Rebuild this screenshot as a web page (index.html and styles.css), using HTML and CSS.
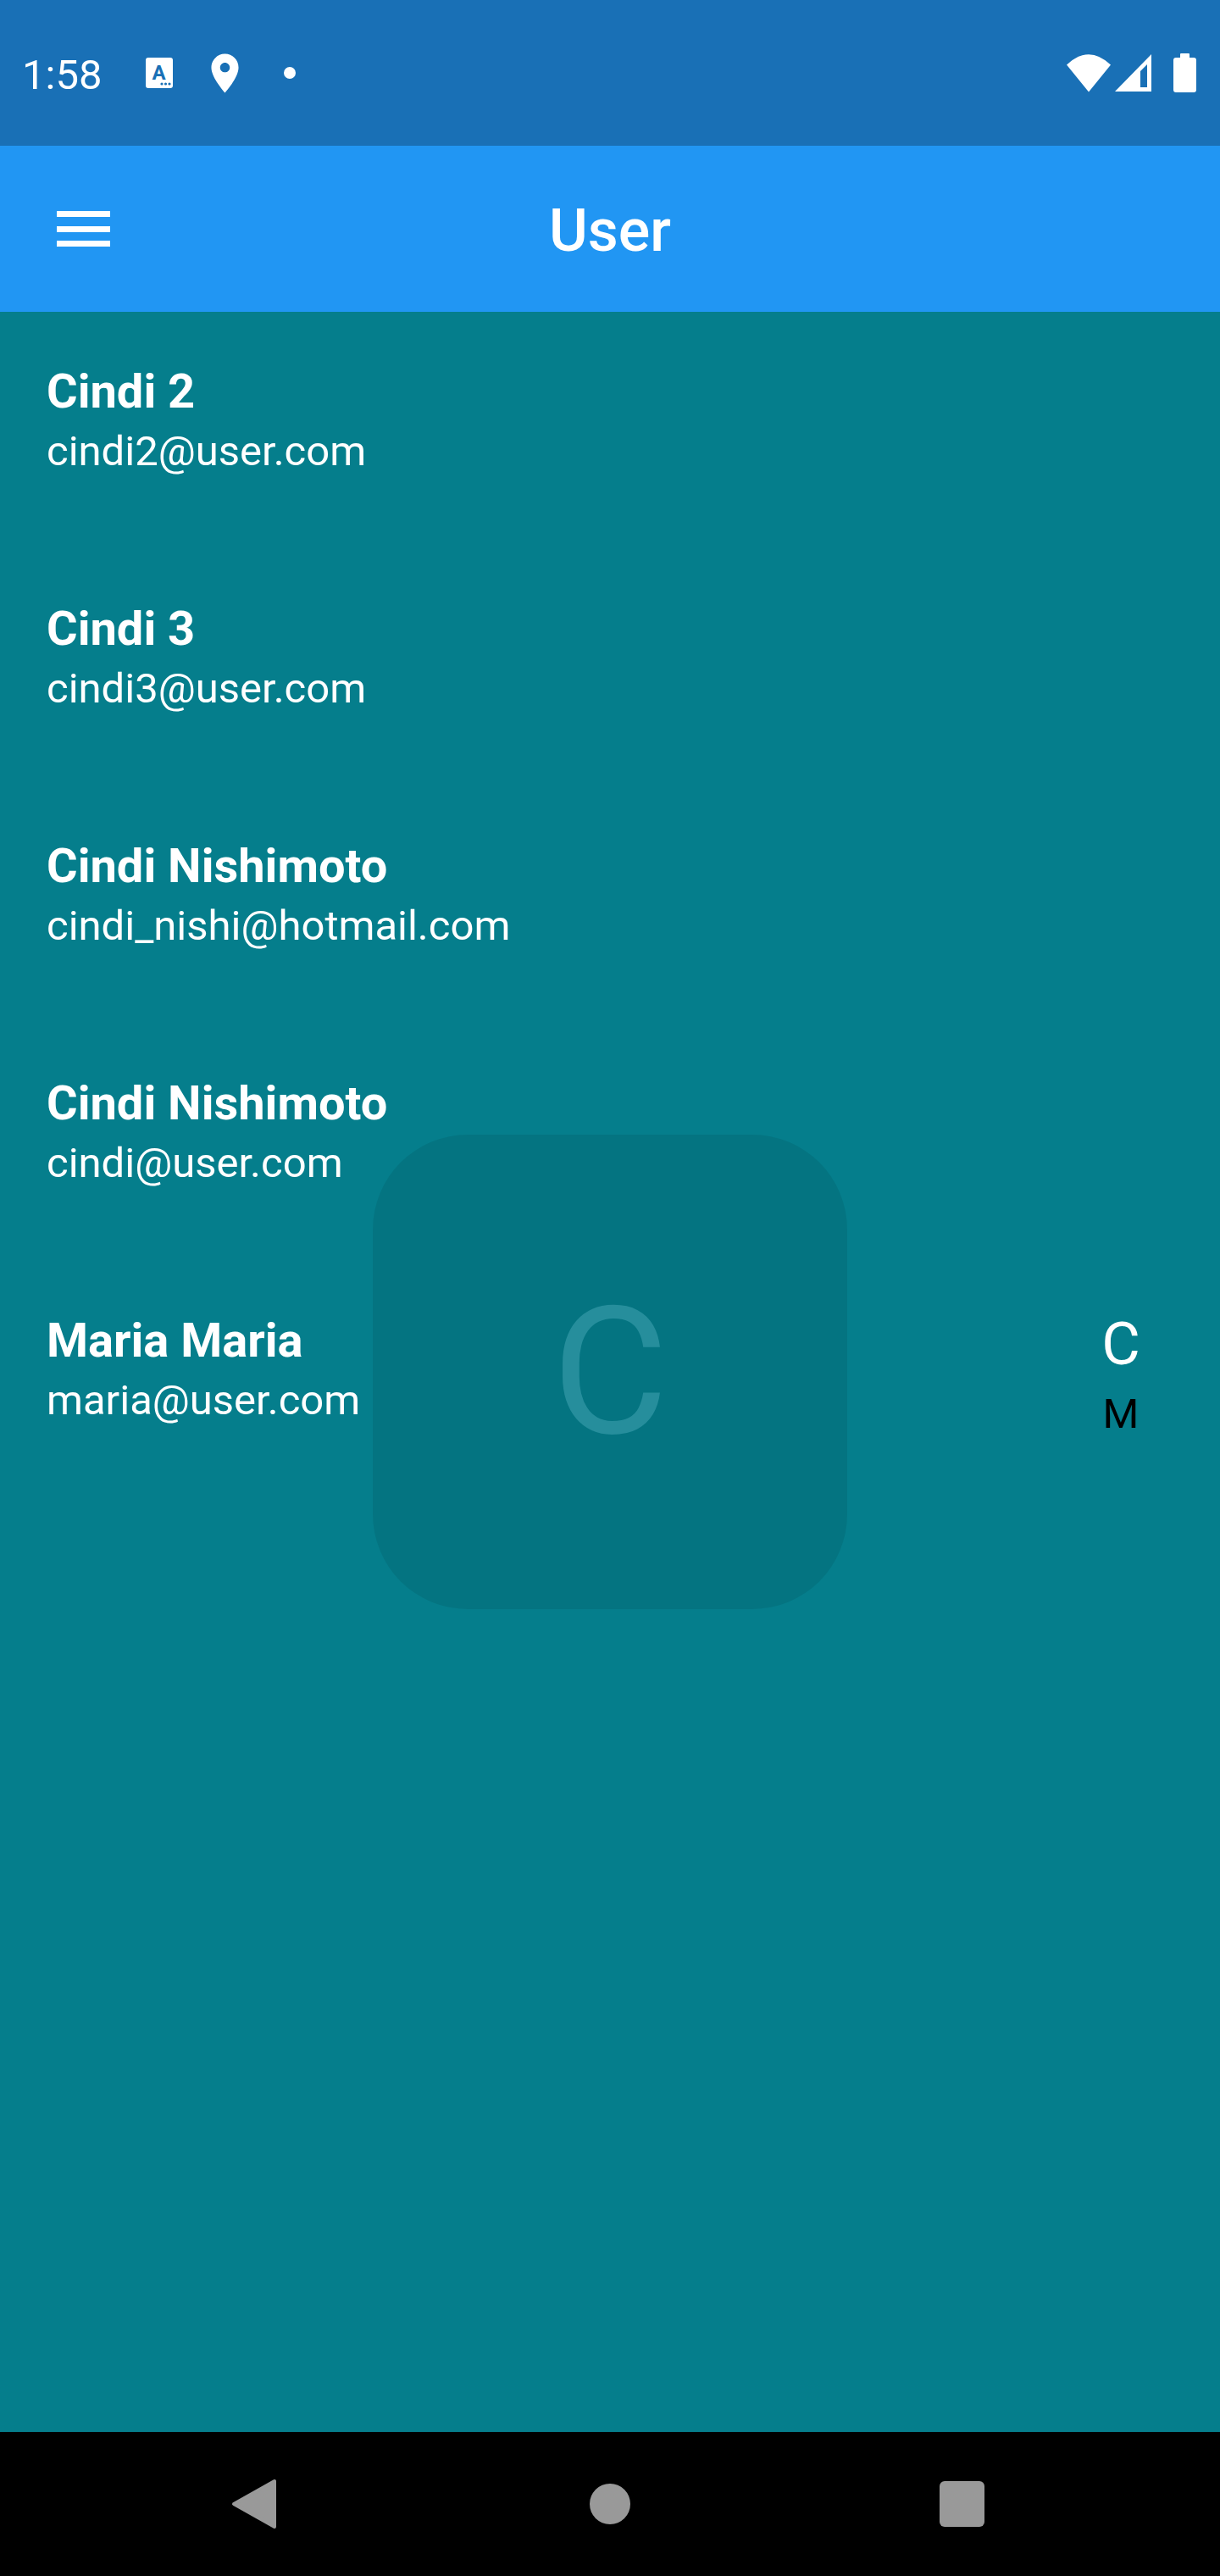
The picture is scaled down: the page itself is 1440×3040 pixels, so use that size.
FILE: index.html
```html
<!DOCTYPE html>
<html lang="en">
<head>
<meta charset="utf-8">
<title>User</title>
<link rel="stylesheet" href="styles.css">
</head>
<body>
<div class="screen">
  <div class="status-bar">
    <span class="time">1:58</span>
    <svg class="ic-a" width="32" height="36" viewBox="0 0 32 36">
      <rect x="0" y="0" width="32" height="36" rx="3" fill="#fff"/>
      <text x="15.5" y="26" text-anchor="middle" class="ic-a-letter">A</text>
      <circle cx="19" cy="31" r="1.6" fill="#1970B6"/>
      <circle cx="23.5" cy="31" r="1.6" fill="#1970B6"/>
      <circle cx="28" cy="31" r="1.6" fill="#1970B6"/>
    </svg>
    <svg class="ic-pin" width="55" height="55" viewBox="0 0 24 24">
      <path fill="#fff" d="M12 2C8.13 2 5 5.13 5 9c0 5.25 7 13 7 13s7-7.75 7-13c0-3.87-3.13-7-7-7zm0 9.5c-1.38 0-2.5-1.12-2.5-2.5s1.12-2.5 2.5-2.5 2.5 1.12 2.5 2.5-1.12 2.5-2.5 2.5z"/>
    </svg>
    <span class="dot"></span>
    <div class="status-right">
      <svg class="ic-wifi" width="54" height="45" viewBox="0 0 54 45">
        <path fill="#fff" d="M1 12.5 Q27 -12 53 12.5 L27 44.5 Z"/>
      </svg>
      <svg class="ic-signal" width="46" height="45" viewBox="0 0 46 45">
        <path fill="#fff" fill-rule="evenodd" d="M1 44 L44 0 L44 44 Z M31 39 L39 39 L39 12 L31 20 Z"/>
      </svg>
      <svg class="ic-battery" width="27" height="46" viewBox="0 0 27 46">
        <rect x="8" y="0" width="11" height="6" rx="1" fill="#fff"/>
        <rect x="0" y="5" width="27" height="41" rx="3" fill="#fff"/>
      </svg>
    </div>
  </div>

  <header class="app-bar">
    <div class="app-bar-lead">
      <span class="menu-icon"><i></i><i></i><i></i></span>
    </div>
    <h1 class="app-title">User</h1>
    <div class="app-bar-trail"></div>
  </header>

  <main class="content">
    <ul class="user-list">
      <li class="user-item">
        <div class="user-name">Cindi 2</div>
        <div class="user-email">cindi2@user.com</div>
      </li>
      <li class="user-item">
        <div class="user-name">Cindi 3</div>
        <div class="user-email">cindi3@user.com</div>
      </li>
      <li class="user-item">
        <div class="user-name">Cindi Nishimoto</div>
        <div class="user-email">cindi_nishi@hotmail.com</div>
      </li>
      <li class="user-item">
        <div class="user-name">Cindi Nishimoto</div>
        <div class="user-email">cindi@user.com</div>
      </li>
      <li class="user-item">
        <div class="user-name">Maria Maria</div>
        <div class="user-email">maria@user.com</div>
      </li>
    </ul>

    <div class="letter-overlay"><span>C</span></div>

    <div class="index-bar">
      <span class="index-letter index-active">C</span>
      <span class="index-letter">M</span>
    </div>
  </main>

  <footer class="nav-bar">
    <svg class="nav-back" width="60" height="64" viewBox="0 0 60 64">
      <path d="M5 32 L53 5 L53 59 Z" fill="#999" stroke="#999" stroke-width="4" stroke-linejoin="round"/>
    </svg>
    <span class="nav-home"></span>
    <span class="nav-recent"></span>
  </footer>
</div>
</body>
</html>
```

FILE: styles.css
```css
html, body {
  margin: 0;
  padding: 0;
}

body {
  width: 1440px;
  height: 3040px;
  font-family: Roboto, "Noto Sans", "Liberation Sans", sans-serif;
  color: #fff;
  overflow: hidden;
}

.screen {
  display: flex;
  flex-direction: column;
  width: 1440px;
  height: 3040px;
}

/* ---------- status bar ---------- */
.status-bar {
  height: 172px;
  flex: 0 0 172px;
  background: #1970B6;
  display: flex;
  align-items: center;
  padding: 0 28px 0 26px;
  box-sizing: border-box;
}

.time {
  font-size: 49px;
  font-weight: 400;
  line-height: 57px;
  width: 122px;
  margin-top: 4px;
}

.ic-a {
  margin-left: 24px;
  display: block;
}

.ic-a-letter {
  font-family: Roboto, "Liberation Sans", sans-serif;
  font-size: 24px;
  font-weight: 700;
  fill: #1970B6;
}

.ic-pin {
  margin-left: 34px;
  display: block;
}

.dot {
  width: 14px;
  height: 14px;
  border-radius: 50%;
  background: #fff;
  margin-left: 42px;
}

.status-right {
  margin-left: auto;
  display: flex;
  align-items: center;
}

.ic-wifi { display: block; }
.ic-signal { display: block; margin-left: 3px; }
.ic-battery { display: block; margin-left: 24px; }

/* ---------- app bar ---------- */
.app-bar {
  height: 196px;
  flex: 0 0 196px;
  background: #2196F3;
  display: flex;
  align-items: center;
}

.app-bar-lead,
.app-bar-trail {
  width: 197px;
  flex: 0 0 197px;
  height: 100%;
  display: flex;
  align-items: center;
}

.menu-icon {
  margin-left: 67px;
  width: 63px;
  height: 42px;
  display: flex;
  flex-direction: column;
  justify-content: space-between;
}

.menu-icon i {
  display: block;
  height: 7px;
  background: #fff;
}

.app-title {
  flex: 1;
  margin: 4px 0 0;
  text-align: center;
  font-size: 70px;
  font-weight: 500;
  line-height: 82px;
}

/* ---------- content ---------- */
.content {
  flex: 1;
  position: relative;
  background: #057E8C;
}

.user-list {
  list-style: none;
  margin: 0;
  padding: 0;
}

.user-item {
  height: 280px;
  box-sizing: border-box;
  padding: 61px 0 0 55px;
}

.user-name {
  font-size: 56px;
  font-weight: 700;
  line-height: 66px;
}

.user-email {
  font-size: 49px;
  font-weight: 400;
  line-height: 58px;
  margin-top: 9px;
}

.letter-overlay {
  position: absolute;
  left: 50%;
  top: 50%;
  width: 560px;
  height: 560px;
  margin: -280px 0 0 -280px;
  border-radius: 112px;
  background: rgba(0, 0, 0, 0.08);
  display: flex;
  align-items: center;
  justify-content: center;
}

.letter-overlay span {
  font-size: 210px;
  font-weight: 400;
  line-height: 246px;
  color: #268E9C;
}

.index-bar {
  position: absolute;
  right: 77px;
  top: 50%;
  margin-top: -74px;
  width: 80px;
  display: flex;
  flex-direction: column;
  align-items: center;
}

.index-letter {
  font-size: 49px;
  line-height: 57px;
  color: #000;
  margin-top: 13px;
}

.index-active {
  font-size: 70px;
  line-height: 82px;
  color: #fff;
  margin-top: 0;
}

/* ---------- nav bar ---------- */
.nav-bar {
  height: 170px;
  flex: 0 0 170px;
  background: #000;
  display: flex;
  align-items: center;
  padding-left: 271px;
  box-sizing: border-box;
}

.nav-back {
  display: block;
}

.nav-home {
  width: 48px;
  height: 48px;
  border-radius: 50%;
  background: #999;
  margin-left: 365px;
}

.nav-recent {
  width: 53px;
  height: 54px;
  border-radius: 6px;
  background: #999;
  margin-left: 365px;
}
```
